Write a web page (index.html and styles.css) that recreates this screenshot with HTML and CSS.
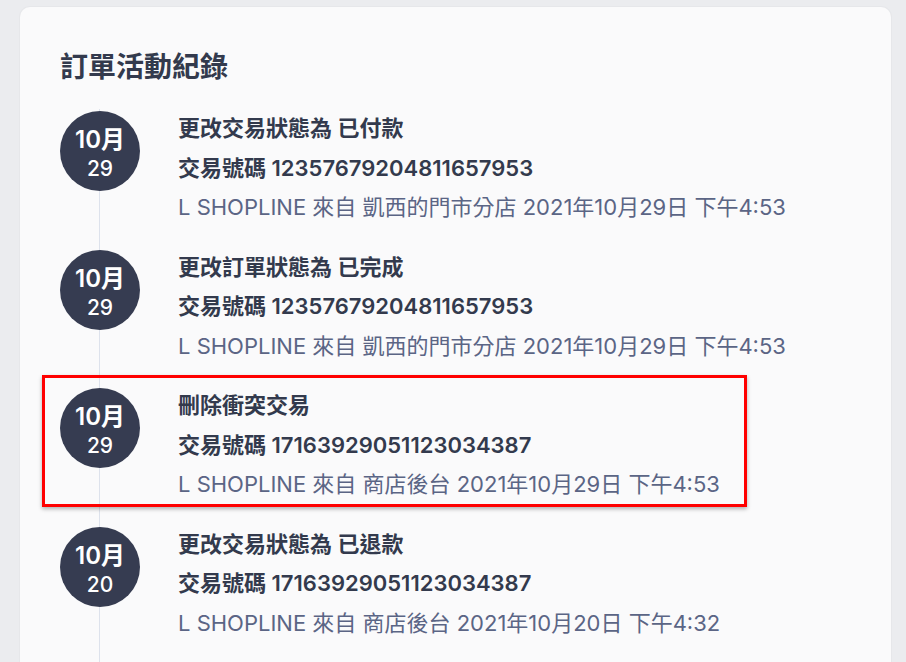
FILE: index.html
```html
<!DOCTYPE html>
<html lang="zh-Hant">
<head>
<meta charset="utf-8">
<title>訂單活動紀錄</title>
<link rel="stylesheet" href="styles.css">
</head>
<body>
<section class="card">
  <h2 class="card-title">訂單活動紀錄</h2>
  <ol class="timeline">
    <li class="event">
      <div class="date"><span class="date-month">10月</span><span class="date-day">29</span></div>
      <div class="event-body">
        <p class="event-line">更改交易狀態為 已付款</p>
        <p class="event-line">交易號碼 12357679204811657953</p>
        <p class="event-meta">L SHOPLINE 來自 凱西的門市分店 2021年10月29日 下午4:53</p>
      </div>
    </li>
    <li class="event">
      <div class="date"><span class="date-month">10月</span><span class="date-day">29</span></div>
      <div class="event-body">
        <p class="event-line">更改訂單狀態為 已完成</p>
        <p class="event-line">交易號碼 12357679204811657953</p>
        <p class="event-meta">L SHOPLINE 來自 凱西的門市分店 2021年10月29日 下午4:53</p>
      </div>
    </li>
    <li class="event is-flagged">
      <div class="date"><span class="date-month">10月</span><span class="date-day">29</span></div>
      <div class="event-body">
        <p class="event-line">刪除衝突交易</p>
        <p class="event-line">交易號碼 17163929051123034387</p>
        <p class="event-meta">L SHOPLINE 來自 商店後台 2021年10月29日 下午4:53</p>
      </div>
    </li>
    <li class="event">
      <div class="date"><span class="date-month">10月</span><span class="date-day">20</span></div>
      <div class="event-body">
        <p class="event-line">更改交易狀態為 已退款</p>
        <p class="event-line">交易號碼 17163929051123034387</p>
        <p class="event-meta">L SHOPLINE 來自 商店後台 2021年10月20日 下午4:32</p>
      </div>
    </li>
  </ol>
</section>
</body>
</html>
```

FILE: styles.css
```css
html, body {
  margin: 0;
  padding: 0;
  background: #ebecef;
}

body {
  font-family: "Inter", "Noto Sans CJK TC", sans-serif;
  color: #333a4d;
  height: 662px;
  overflow: hidden;
}

.card {
  margin: 7px 0 0 20px;
  width: 871px;
  min-height: 700px;
  box-sizing: border-box;
  padding: 40px 40px 0 40px;
  background: #fafafb;
  border-radius: 10px 10px 0 0;
  box-shadow: 0 0 0 1px #e6e7ea;
}

.card-title {
  margin: 0;
  font-size: 28px;
  line-height: 40px;
  font-weight: 600;
  color: #333a4d;
}

.timeline {
  list-style: none;
  margin: 22px 0 0 0;
  padding: 0;
  position: relative;
}

/* vertical rail running behind the date badges */
.timeline::before {
  content: "";
  position: absolute;
  left: 39px;
  top: 0;
  bottom: -200px;
  width: 1px;
  background: #dde2ec;
}

.event {
  position: relative;
  display: flex;
  gap: 38px;
  margin-bottom: 20px;
}

.date {
  position: relative;
  flex: 0 0 80px;
  width: 80px;
  height: 80px;
  margin-top: 2px;
  padding-top: 6px;
  box-sizing: border-box;
  border-radius: 50%;
  background: #363c51;
  color: #fff;
  display: flex;
  flex-direction: column;
  align-items: center;
  justify-content: center;
}

.date-month {
  font-size: 24px;
  line-height: 30px;
  font-weight: 600;
}

.date-day {
  font-size: 21px;
  line-height: 28px;
  font-weight: 500;
}

.event-body {
  min-width: 0;
}

.event-line,
.event-meta {
  margin: 0;
  font-size: 22px;
  line-height: 39.5px;
  white-space: nowrap;
}

.event-line {
  font-weight: 600;
  color: #333a4d;
}

.event-meta {
  font-weight: 400;
  color: #5b6585;
}

/* review marker drawn around a flagged event */
.is-flagged::after {
  content: "";
  position: absolute;
  top: -11px;
  left: -18px;
  width: 705px;
  height: 132px;
  box-sizing: border-box;
  border: 3px solid #ff0000;
  box-shadow: 0 2px 4px rgba(0, 0, 0, 0.3);
  pointer-events: none;
}
```
